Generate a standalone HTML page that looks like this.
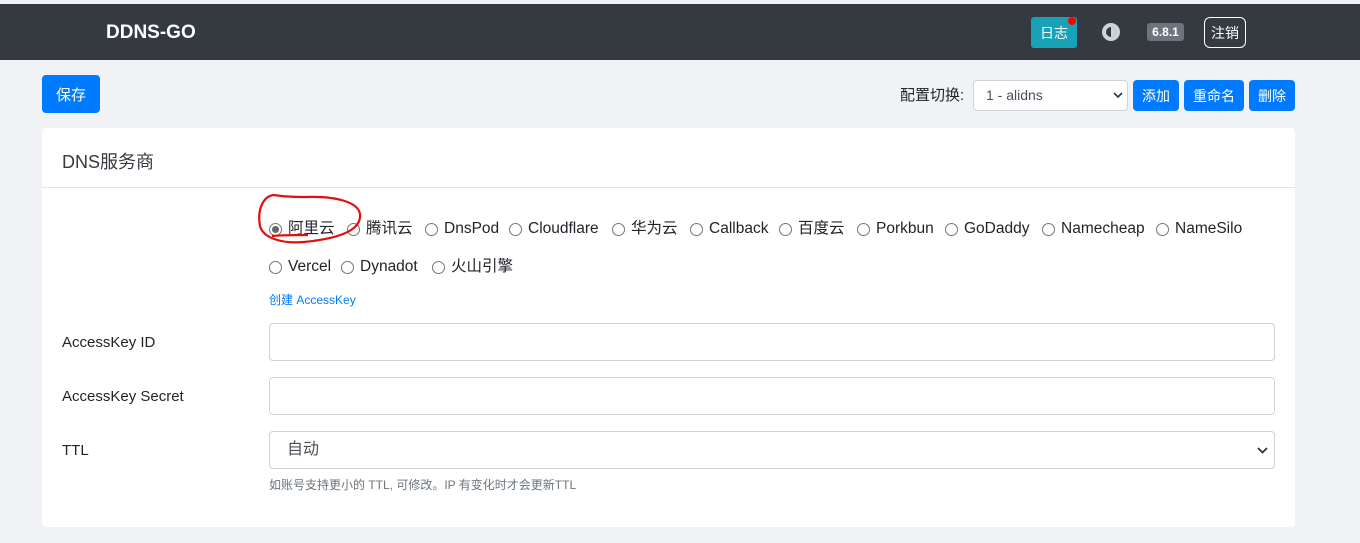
<!DOCTYPE html>
<html><head><meta charset="utf-8"><style>
*{box-sizing:border-box}
body{margin:0;width:1360px;height:543px;overflow:hidden;background:#f1f2f6;font-family:"Liberation Sans","Noto Sans CJK SC",sans-serif;color:#212529;position:relative}
.hdr{position:absolute;top:4px;left:0;width:1360px;height:56px;background:#343a40}
.abs{position:absolute}
.btn{position:absolute;background:#007bff;color:#fff;border-radius:4px;font-size:14px;display:flex;align-items:center;justify-content:center}
.card{position:absolute;left:42px;top:128px;width:1253px;height:399px;background:#fff;border-radius:4px}
.inp{position:absolute;left:269px;width:1006px;height:38px;border:1px solid #ced4da;border-radius:4px;background:#fff}
.lbl{position:absolute;left:62px;font-size:15px}
.r{position:absolute;font-size:15.5px;height:20px;line-height:20px;white-space:nowrap}
.r i{display:inline-block;width:13px;height:13px;border:1px solid #767676;border-radius:50%;margin-right:6px;position:absolute;left:0;top:4px}
.r span{position:absolute;left:19px;top:0;line-height:20px}
.r i.on::after{content:"";position:absolute;left:2px;top:2px;width:7px;height:7px;border-radius:50%;background:#666}
.chev{position:absolute}
</style></head><body>
<div class="hdr"></div>
<div class="abs" style="left:106px;top:22px;color:#fff;font-weight:bold;font-size:19px">DDNS-GO</div>
<div class="abs" style="left:1031px;top:17px;width:46px;height:31px;background:#17a2b8;border-radius:3px;color:#fff;font-size:14px;display:flex;align-items:center;justify-content:center">日志</div>
<div class="abs" style="left:1068px;top:17px;width:8px;height:8px;background:#f00;border-radius:50%"></div>
<svg class="abs" style="left:1101px;top:22px" width="22" height="20" viewBox="0 0 22 20"><circle cx="10" cy="10" r="9" fill="#ced4da"/><circle cx="10" cy="10" r="5" fill="#343a40"/><path d="M10 5a5 5 0 0 1 0 10z" fill="#ced4da"/></svg>
<div class="abs" style="left:1147px;top:23px;width:37px;height:18px;background:#6c757d;border-radius:3px;color:#fff;font-size:12px;font-weight:bold;display:flex;align-items:center;justify-content:center">6.8.1</div>
<div class="abs" style="left:1204px;top:17px;width:42px;height:31px;border:1px solid #fff;border-radius:6px;color:#fff;font-size:14px;display:flex;align-items:center;justify-content:center">注销</div>

<div class="btn" style="left:42px;top:75px;width:58px;height:38px;font-size:15px">保存</div>
<div class="abs" style="left:900px;top:86px;font-size:15px;line-height:20px">配置切换:</div>
<div class="abs" style="left:973px;top:80px;width:155px;height:31px;border:1px solid #ced4da;border-radius:4px;background:#fff;font-size:14px;line-height:29px;padding:0 12px;color:#495057">1 - alidns<svg class="chev" style="right:4px;top:11px" width="10" height="7"><path d="M1 1l4 4 4-4" fill="none" stroke="#333" stroke-width="1.6"/></svg></div>
<div class="btn" style="left:1133px;top:80px;width:46px;height:31px">添加</div>
<div class="btn" style="left:1184px;top:80px;width:60px;height:31px">重命名</div>
<div class="btn" style="left:1249px;top:80px;width:46px;height:31px">删除</div>

<div class="card"></div>
<div class="abs" style="left:42px;top:187px;width:1253px;height:1px;background:#e5e5e5"></div>
<div class="abs" style="left:62px;top:148px;font-size:18px;color:#343a40">DNS服务商</div>

<div class="r" style="left:269px;top:219px"><i class="on"></i><span>阿里云</span></div>
<div class="r" style="left:347px;top:219px"><i></i><span>腾讯云</span></div>
<div class="r" style="left:425px;top:219px"><i></i><span>DnsPod</span></div>
<div class="r" style="left:509px;top:219px"><i></i><span>Cloudflare</span></div>
<div class="r" style="left:612px;top:219px"><i></i><span>华为云</span></div>
<div class="r" style="left:690px;top:219px"><i></i><span>Callback</span></div>
<div class="r" style="left:779px;top:219px"><i></i><span>百度云</span></div>
<div class="r" style="left:857px;top:219px"><i></i><span>Porkbun</span></div>
<div class="r" style="left:945px;top:219px"><i></i><span>GoDaddy</span></div>
<div class="r" style="left:1042px;top:219px"><i></i><span>Namecheap</span></div>
<div class="r" style="left:1156px;top:219px"><i></i><span>NameSilo</span></div>
<div class="r" style="left:269px;top:257px"><i></i><span>Vercel</span></div>
<div class="r" style="left:341px;top:257px"><i></i><span>Dynadot</span></div>
<div class="r" style="left:432px;top:257px"><i></i><span>火山引擎</span></div>
<svg class="abs" style="left:254px;top:190px" width="112" height="64"><path d="M20 5C9 6 3 20 6 36c3 12 22 18 44 16 30-3 58-10 56-28C104 12 82 6 52 7 38 7 26 6 20 5M18 46c12-1 24-1 36-1" fill="none" stroke="#e01010" stroke-width="2.2"/></svg>
<div class="abs" style="left:269px;top:291px;font-size:12px;color:#007bff">创建 AccessKey</div>

<div class="lbl" style="top:334px">AccessKey ID</div>
<div class="inp" style="top:323px"></div>
<div class="lbl" style="top:388px">AccessKey Secret</div>
<div class="inp" style="top:377px"></div>
<div class="lbl" style="top:442px">TTL</div>
<div class="inp" style="top:431px;font-size:16px;line-height:36px;padding:0 17px;color:#495057">自动<svg class="chev" style="right:6px;top:15px" width="11" height="8"><path d="M1 1l4.5 4.5L10 1" fill="none" stroke="#333" stroke-width="1.8"/></svg></div>
<div class="abs" style="left:269px;top:476px;font-size:12px;color:#6c757d">如账号支持更小的 TTL, 可修改。IP 有变化时才会更新TTL</div>
</body></html>
